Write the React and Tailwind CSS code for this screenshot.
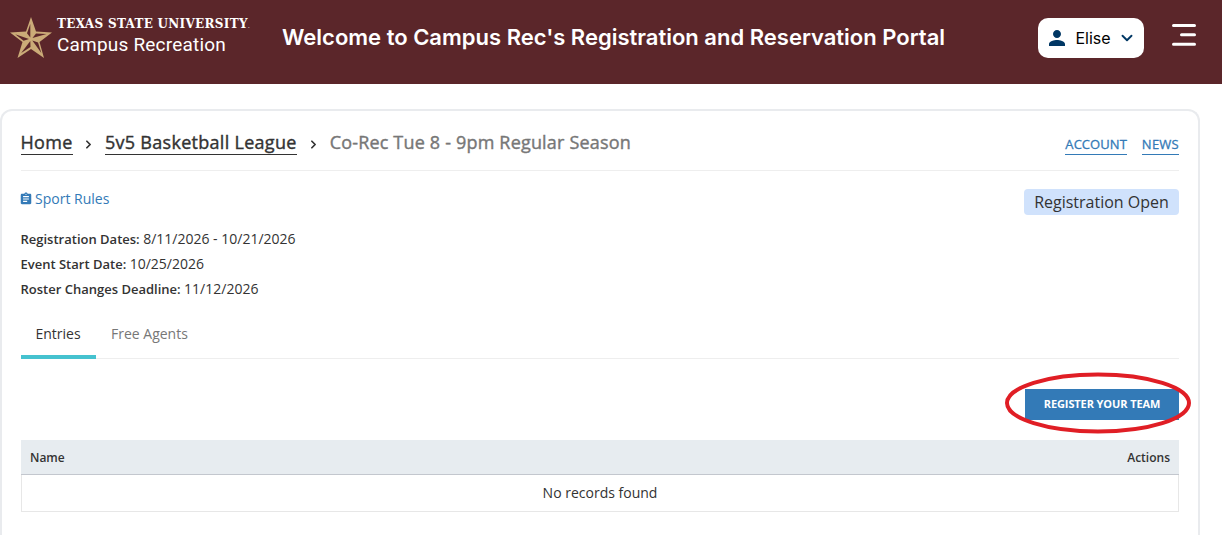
import { ChevronDown, ChevronRight } from 'lucide-react';
import { MdPerson, MdAssignment } from 'react-icons/md';

const infos = [
  { label: 'Registration Dates:', value: '8/11/2026 - 10/21/2026' },
  { label: 'Event Start Date:', value: '10/25/2026' },
  { label: 'Roster Changes Deadline:', value: '11/12/2026' },
];

function StarLogo() {
  return (
    <svg width="42" height="42" viewBox="0 0 42 42" className="shrink-0">
      <path
        d="M21 0 L26 14.5 L42 15.5 L29.5 25 L34 41 L21 32 L7.5 41 L12.5 25 L0 15.5 L16 14.5 Z"
        fill="#cbab78"
      />
      {/* shaded facets */}
      <g fill="#5b262a">
        <path d="M20.3 7 L20.3 20.5 L17 16.2 Z" />
        <path d="M36.5 16.9 L22.5 21 L26 16.6 Z" />
        <path d="M31.3 36 L22.3 23.5 L28 25.5 Z" />
        <path d="M11.2 36 L20.3 24 L20.5 30 Z" />
        <path d="M5.2 17.3 L19 22 L13.6 23.8 Z" />
      </g>
    </svg>
  );
}

function Header() {
  return (
    <header className="flex h-[84px] items-start bg-[#5b262a] text-white">
      <div className="flex w-[282px] shrink-0 pt-[17px] pl-[10px]">
        <StarLogo />
        <div className="ml-[5px] pt-px whitespace-nowrap">
          <p className="h-[14px] font-['DejaVu_Serif',serif] text-[12px] leading-[13px] font-bold tracking-[0.3px]">
            TEXAS STATE UNIVERSITY<span className="text-[6px] opacity-60">.</span>
          </p>
          <p className="pt-[2px] font-['Roboto',sans-serif] text-[19px] leading-[22px] tracking-[0.2px]">
            Campus Recreation
          </p>
        </div>
      </div>
      <h1 className="flex-1 pt-[21px] font-['Inter',sans-serif] text-[22px] leading-8 font-semibold whitespace-nowrap">
        Welcome to Campus Rec's Registration and Reservation Portal
      </h1>
      <button className="mt-[18px] mr-[28px] flex h-10 w-[106px] items-center rounded-[10px] bg-white pl-[7px]">
        <MdPerson size={24} className="text-[#003764]" />
        <span className="ml-[5px] w-[38px] font-['Inter',sans-serif] text-base text-black">Elise</span>
        <ChevronDown size={18} strokeWidth={2.5} className="ml-1.5 text-[#003764]" />
      </button>
      <button className="mt-6 mr-[26px]">
        <svg width="24" height="22" viewBox="0 0 24 22" stroke="#fff" strokeWidth="3" strokeLinecap="round">
          <path d="M1.5 1.5 H22.5 M9.5 10.7 H22.5 M1.5 20.3 H22.5" />
        </svg>
      </button>
    </header>
  );
}

function Breadcrumb() {
  return (
    <div className="flex h-[60px] items-start justify-between border-b border-[#eeeeee] pt-[19px]">
      <nav className="-ml-[0.5px] flex items-center text-[18px] leading-6 text-[#333] [-webkit-text-stroke:0.4px]">
        <a className="border-b border-[#333] tracking-[0.29px]">Home</a>
        <ChevronRight size={13} strokeWidth={3.2} className="mx-[9.7px] mt-[3px]" />
        <a className="border-b border-[#333] tracking-[0.29px]">5v5 Basketball League</a>
        <ChevronRight size={13} strokeWidth={3.2} className="mx-[10px] mt-[3px]" />
        <span className="mb-px tracking-[0.18px] text-[#777]">Co-Rec Tue 8 - 9pm Regular Season</span>
      </nav>
      <div className="flex gap-[15px] pt-1 text-[13px] leading-5 text-[#337ab7] [-webkit-text-stroke:0.3px]">
        <a className="border-b border-[#337ab7] tracking-[0.05px]">ACCOUNT</a>
        <a className="border-b border-[#337ab7] tracking-[0.25px]">NEWS</a>
      </div>
    </div>
  );
}

export default function App() {
  return (
    <div className="h-[535px] overflow-hidden bg-white font-['Open_Sans',sans-serif] text-[#333]">
      <Header />
      <main className="mt-[25px] h-[440px] w-[1200px] rounded-t-xl border-2 border-b-0 border-[#e9ebee] px-[19px]">
        <Breadcrumb />

        <div className="flex h-[55px] items-start justify-between pt-[18px]">
          <a className="flex items-center gap-[2px] pt-px text-sm leading-[18px] text-[#337ab7]">
            <MdAssignment size={14} className="-ml-[2px]" />
            Sport Rules
          </a>
          <span className="flex h-[26px] w-[155px] items-center justify-center rounded bg-[#d0e2fc] text-base">
            Registration Open
          </span>
        </div>

        <div className="-ml-[0.5px] text-sm leading-[25px]">
          {infos.map((i) => (
            <p key={i.label} className="h-[25px]">
              <span className="text-[13px] font-semibold">{i.label}</span>
              <span className="ml-[3.5px]">{i.value}</span>
            </p>
          ))}
        </div>

        <div className="flex h-[58px] items-end border-b border-[#eeeeee] text-sm leading-5">
          <div className="-mb-px h-[35px] w-[75px] border-b-4 border-[#45c2cf] pr-px text-center">Entries</div>
          <div className="h-[34px] px-[15px] text-[#777]">Free Agents</div>
        </div>

        {/* main action, ringed in red */}
        <div className="flex justify-end pt-[30px]">
          <div className="relative">
            <button className="block h-[31px] w-[154px] bg-[#337ab7] text-[11px] font-bold tracking-[-0.1px] text-white">
              REGISTER YOUR TEAM
            </button>
            <svg width="186" height="62" viewBox="0 0 186 62" className="absolute top-[-17px] left-[-20px]">
              <ellipse cx="93" cy="31" rx="91" ry="28.5" fill="none" stroke="#e01e25" strokeWidth="4" />
            </svg>
          </div>
        </div>

        <div className="mt-5 border border-t-0 border-[#e7e7e7]">
          <div className="-mx-px flex h-[35px] items-center justify-between border-b border-[#c3c7ce] bg-[#e7ecf0] px-[9px] pt-px text-xs font-semibold">
            <span>Name</span>
            <span>Actions</span>
          </div>
          <p className="h-9 text-center text-sm leading-9">No records found</p>
        </div>
      </main>
    </div>
  );
}
